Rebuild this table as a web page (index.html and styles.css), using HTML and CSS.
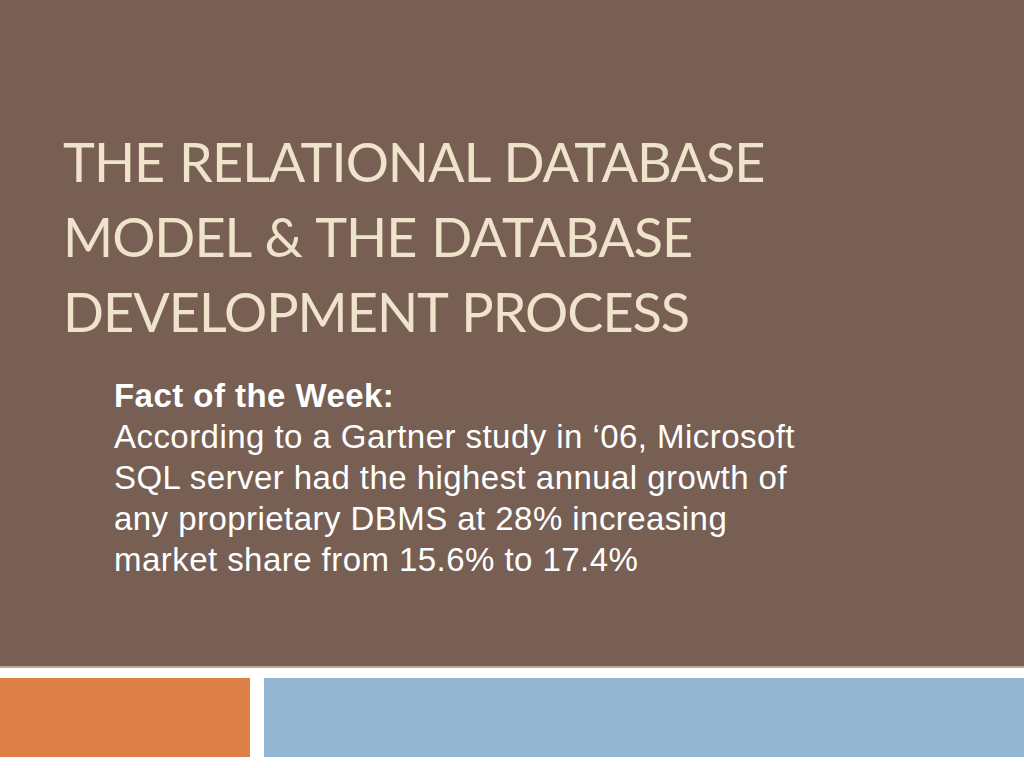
FILE: index.html
```html
<!DOCTYPE html>
<html>
<head>
<meta charset="utf-8">
<link rel="stylesheet" href="styles.css">
</head>
<body>
<div class="slide">
  <div class="main">
    <h1 class="title">The Relational Database<br>Model &amp; the Database<br>Development Process</h1>
    <div class="body">
      <p class="fact"><b>Fact of the Week:</b><br>According to a Gartner study in ‘06, Microsoft SQL server had the highest annual growth of any proprietary DBMS at 28% increasing market share from 15.6% to 17.4%</p>
    </div>
  </div>
  <div class="gap"></div>
  <div class="bands">
    <div class="orange"></div>
    <div class="blue"></div>
  </div>
</div>
</body>
</html>
```
FILE: styles.css
```css
html, body {
  margin: 0;
  padding: 0;
  background: #ffffff;
}
.slide {
  width: 1024px;
  height: 768px;
  display: flex;
  flex-direction: column;
  overflow: hidden;
}
.main {
  height: 666px;
  background: #775f53;
  border-bottom: 2px solid #b8a994;
  box-sizing: content-box;
  padding: 0 0 0 63px;
}
.title {
  margin: 0;
  padding-top: 124px;
  font-family: "Lato", "DejaVu Sans", sans-serif;
  font-weight: 400;
  font-size: 54px;
  line-height: 75px;
  text-transform: uppercase;
  color: #efe3cc;
  letter-spacing: -1px;
  word-spacing: 2px;
}
.body {
  padding-left: 51px;
  margin-top: 26px;
}
.fact {
  margin: 0;
  width: 700px;
  font-family: "Liberation Sans", Arial, sans-serif;
  font-size: 33px;
  line-height: 41px;
  letter-spacing: 0.45px;
  color: #ffffff;
}
.fact b {
  font-weight: 700;
}
.gap {
  height: 10px;
}
.bands {
  display: flex;
  gap: 14px;
  height: 79px;
}
.orange {
  width: 250px;
  background: #dd8047;
}
.blue {
  flex: 1;
  background: #94b6d2;
}
```
